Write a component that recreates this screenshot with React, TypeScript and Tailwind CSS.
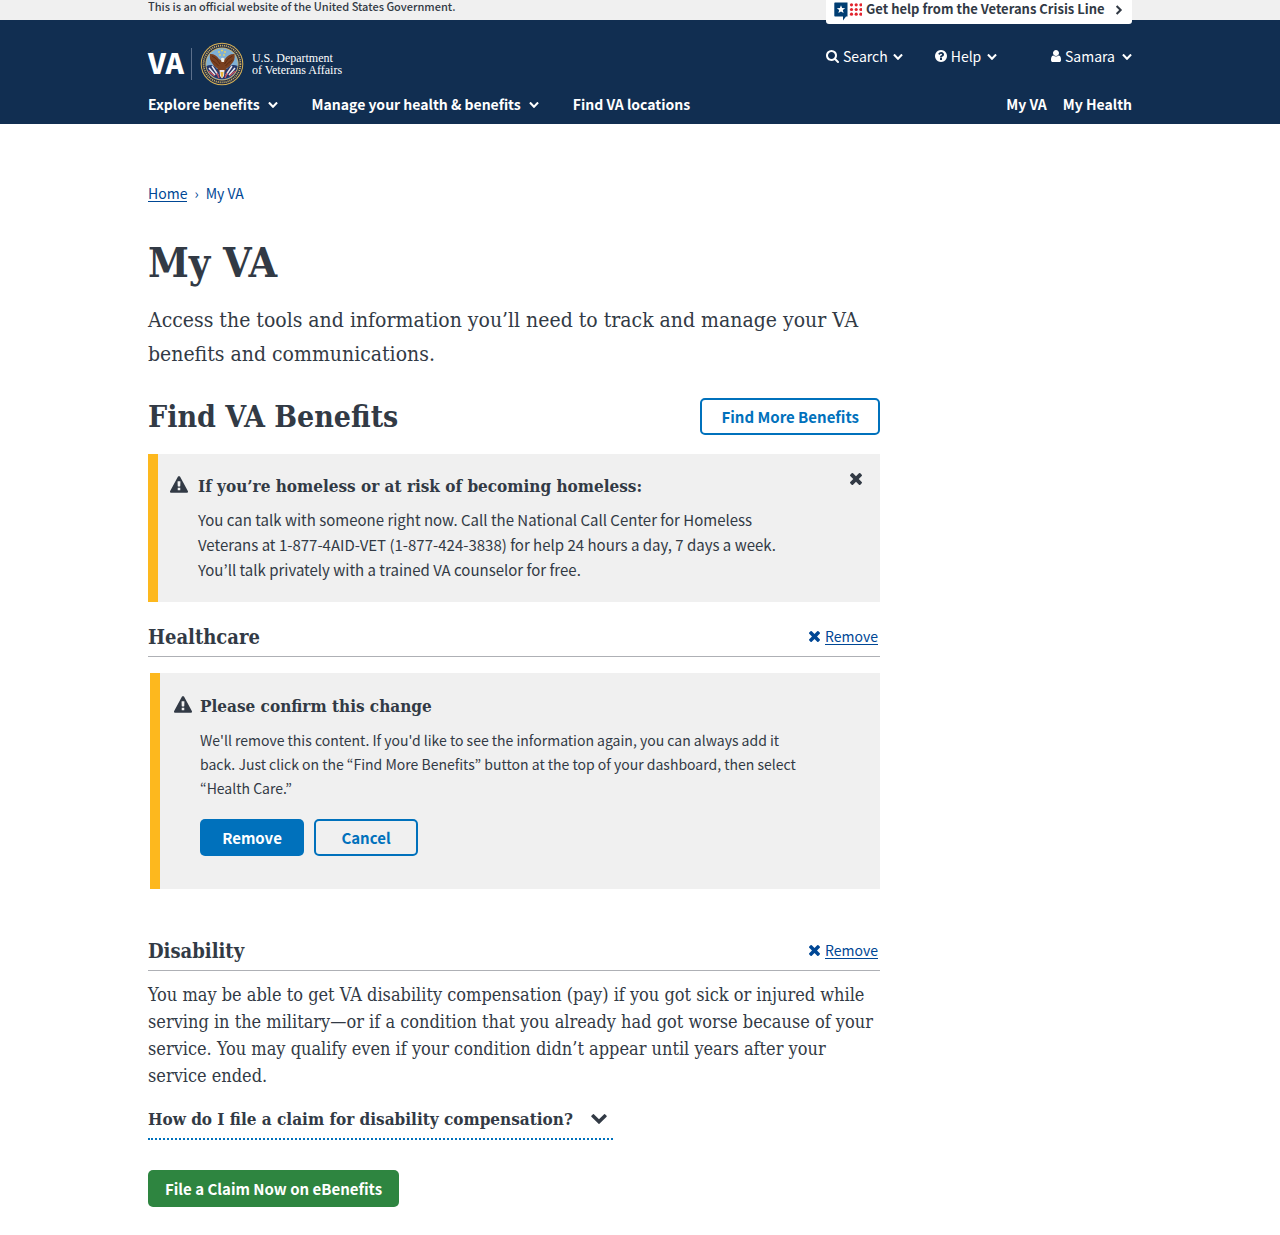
import React, { useState } from "react";

const sans = "font-['Noto_Sans_CJK_JP','Open_Sans',sans-serif]";
const serif = "font-['DejaVu_Serif_Condensed','DejaVu_Serif',serif]";

const shapes = {
  times: {
    box: "302 366 1188 1188",
    d: "M1490 1322q0 40-28 68l-136 136q-28 28-68 28t-68-28l-294-294-294 294q-28 28-68 28t-68-28l-136-136q-28-28-28-68t28-68l294-294-294-294q-28-28-28-68t28-68l136-136q28-28 68-28t68 28l294 294 294-294q28-28 68-28t68 28l136 136q28 28 28 68t-28 68l-294 294 294 294q28 28 28 68z",
  },
  chevron: {
    box: "90 533 1612 1035",
    d: "M1683 808l-742 741q-19 19-45 19t-45-19l-742-741q-19-19-19-45.5t19-45.5l166-165q19-19 45-19t45 19l531 531 531-531q19-19 45-19t45 19l166 165q19 19 19 45.5t-19 45.5z",
  },
  warning: {
    box: "0 0 1792 1664",
    d: "M1024 1375v-190q0-14-9.5-23.5t-22.5-9.5h-192q-13 0-22.5 9.5t-9.5 23.5v190q0 14 9.5 23.5t22.5 9.5h192q13 0 22.5-9.5t9.5-23.5zm-2-374l18-459q0-12-10-19-13-11-24-11h-220q-11 0-24 11-10 7-10 21l17 457q0 10 10 16.5t24 6.5h185q14 0 23.5-6.5t10.5-16.5zm-14-934l768 1408q35 63-2 126-17 29-46.5 46t-63.5 17h-1536q-34 0-63.5-17t-46.5-46q-37-63-2-126l768-1408q17-31 47-49t65-18 65 18 47 49z",
  },
  search: {
    box: "64 128 1664 1664",
    d: "M1216 832q0-185-131.5-316.5t-316.5-131.5-316.5 131.5-131.5 316.5 131.5 316.5 316.5 131.5 316.5-131.5 131.5-316.5zm512 832q0 52-38 90t-90 38q-54 0-90-38l-343-342q-179 124-399 124-143 0-273.5-55.5t-225-150-150-225-55.5-273.5 55.5-273.5 150-225 225-150 273.5-55.5 273.5 55.5 225 150 150 225 55.5 273.5q0 220-124 399l343 343q37 37 37 90z",
  },
  help: {
    box: "128 128 1536 1536",
    d: "M1024 1376v-192q0-14-9-23t-23-9h-192q-14 0-23 9t-9 23v192q0 14 9 23t23 9h192q14 0 23-9t9-23zm256-672q0-88-55.5-163t-138.5-116-170-41q-243 0-371 213-15 24 8 42l132 100q7 6 19 6 16 0 25-12 53-68 86-92 34-24 86-24 48 0 85.5 26t37.5 59q0 38-20 61t-68 45q-63 28-115.5 86.5t-52.5 125.5v36q0 14 9 23t23 9h192q14 0 23-9t9-23q0-19 21.5-49.5t54.5-49.5q32-18 49-28.5t46-35 44.5-48 28-60.5 12.5-81zm384 192q0 209-103 385.5t-279.5 279.5-385.5 103-385.5-103-279.5-279.5-103-385.5 103-385.5 279.5-279.5 385.5-103 385.5 103 279.5 279.5 103 385.5z",
  },
  user: {
    box: "256 128 1280 1536",
    d: "M1536 1399q0 109-62.5 187t-150.5 78h-854q-88 0-150.5-78t-62.5-187q0-85 8.5-160.5t31.5-152 58.5-131 94-89 134.5-34.5q131 128 313 128t313-128q76 0 134.5 34.5t94 89 58.5 131 31.5 152 8.5 160.5zm-256-887q0 159-112.5 271.5t-271.5 112.5-271.5-112.5-112.5-271.5 112.5-271.5 271.5-112.5 271.5 112.5 112.5 271.5z",
  },
};

function Icon({ name, className }: { name: keyof typeof shapes; className: string }) {
  return (
    <svg viewBox={shapes[name].box} className={`shrink-0 ${className}`} fill="currentColor" aria-hidden="true">
      <path d={shapes[name].d} />
    </svg>
  );
}

function Seal() {
  return (
    <svg viewBox="0 0 44 44" className="size-11 shrink-0" aria-label="Seal of the Department of Veterans Affairs" role="img">
      <circle cx="22" cy="22" r="21.3" fill="#d9b356" />
      <circle cx="22" cy="22" r="20.3" fill="#1c2a4a" />
      <circle cx="22" cy="22" r="18.4" fill="none" stroke="#c9ad62" strokeWidth="1.8" strokeDasharray="1.1 0.9" />
      <circle cx="22" cy="22" r="16.6" fill="#d9b356" />
      <circle cx="22" cy="22" r="15.8" fill="#7fb0d6" />
      <path d="M6.4 24 Q13 21 17 27 L27 27 Q31 21 37.6 24 A15.8 15.8 0 0 1 6.4 24Z" fill="#26376b" />
      <path d="M9 26l6 7M12 24l6 9M35 26l-6 7M32 24l-6 9" stroke="#e9e4ea" strokeWidth="1.5" />
      <path d="M8.500 29l6 5M35.500 29l-6 5M17 31l2 5M27 31l-2 5" stroke="#c8505a" strokeWidth="1.4" />
      <g fill="#ecd35d">
        <circle cx="22" cy="8.5" r="1" />
        <circle cx="19" cy="10" r="0.9" />
        <circle cx="25" cy="10" r="0.9" />
        <circle cx="20" cy="13" r="0.9" />
        <circle cx="24" cy="13" r="0.9" />
      </g>
      <path d="M10 12 Q15 11.500 19 17 L22 19 L25 17 Q29 11.500 34.500 12 Q35.500 18 31.500 22 Q29.500 25 26.500 26.500 L25 30 L19 30 L17.500 26.500 Q14 25 12 21 Q9 17 10 12Z" fill="#7a4020" />
      <path d="M12 14q5 2 8 8M11.500 18q4 2 7 6M32.500 14q-5 2-8 8M32.500 18q-4 2-7 6" stroke="#54260f" strokeWidth="0.8" fill="none" />
      <path d="M21 16.500q2-1.500 3.500.5l-.5 3h-2.500z" fill="#f3eee4" />
      <path d="M19.500 28h5l-.5 6-2 2.500-2-2.500z" fill="#e8e5ea" />
      <path d="M20.500 30h3l-.5 4-1 2-1-2z" fill="#e8b63a" />
    </svg>
  );
}

function CrisisIcon() {
  const steps = [0, 1, 2];
  return (
    <svg viewBox="0 0 28 19" className="h-[19px] w-7 shrink-0" aria-hidden="true">
      <path d="M1 0.500h12.500v14h-1.500l-3 4v-4H1q-.7 0-.7-.7V1.200q0-.7.7-.7z" fill="#003e73" />
      <path d="M7 3.200l1.100 2.900 3.100.1-2.400 1.900.8 3L7 9.400l-2.600 1.700.8-3-2.400-1.900 3.100-.1z" fill="#fff" />
      {steps.map((r) =>
        steps.map((c) => <circle key={`${r}${c}`} cx={17.5 + c * 4.7} cy={2.8 + r * 4.7} r="1.6" fill="#e2232e" />),
      )}
    </svg>
  );
}

function RemoveLink() {
  return (
    <a href="#remove" className="flex items-center gap-[5px] pr-0.5 text-[14px] leading-5 text-[#004795]">
      <Icon name="times" className="size-[11px]" />
      <span className="border-b border-[#004795] leading-4">Remove</span>
    </a>
  );
}

function SectionHeader({ title }: { title: string }) {
  return (
    <div className="flex h-10 items-center justify-between border-b border-[#aeb0b5]">
      <h3 className={`${serif} text-[20px] leading-6 font-bold`}>{title}</h3>
      <RemoveLink />
    </div>
  );
}

export default function App() {
  const [open, setOpen] = useState(false);
  return (
    <div className={`${sans} min-h-screen bg-white pb-7 text-[#323a45]`}>
      <div className="h-5 bg-[#f0f0f0]">
        <div className="mx-auto flex max-w-[984px] items-start justify-between">
          <p className="text-[11px] leading-3 font-medium">This is an official website of the United States Government.</p>
          <a
            href="#crisis"
            className="relative z-10 flex h-6 w-[306px] items-start gap-1 rounded-b-[3px] bg-white px-2 pt-0.5 text-[13px] leading-[14px] font-bold"
          >
            <CrisisIcon />
            <span>Get help from the Veterans Crisis Line</span>
            <Icon name="chevron" className="mt-[5px] ml-auto h-1.5 w-2.5 -rotate-90" />
          </a>
        </div>
      </div>

      <header className="bg-[#112e51] text-white">
        <div className="mx-auto flex h-[104px] max-w-[984px] flex-col justify-between pb-2.5">
          <div className="flex items-start justify-between">
            <a href="#home" className="mt-[22px] flex items-center">
              <span className="pb-1 text-[28px] leading-10 font-black">VA</span>
              <span className="ml-[7px] h-8 w-px bg-[#5b6f8b]" />
              <span className="ml-2">
                <Seal />
              </span>
              <span className="ml-2 font-['Liberation_Serif',serif] text-[12px] leading-3">
                U.S. Department
                <br />
                of Veterans Affairs
              </span>
            </a>
            <div className="flex w-[306px] pt-[26px] text-[14px] leading-5">
              <button className="flex items-center gap-1">
                <Icon name="search" className="size-[13px]" />
                Search
                <Icon name="chevron" className="mt-0.5 ml-px h-1.5 w-2.5" />
              </button>
              <button className="ml-8 flex items-center gap-1">
                <Icon name="help" className="size-3" />
                Help
                <Icon name="chevron" className="mt-0.5 ml-0.5 h-1.5 w-2.5" />
              </button>
              <button className="ml-auto flex items-center gap-1">
                <Icon name="user" className="h-3 w-2.5" />
                Samara
                <Icon name="chevron" className="mt-0.5 ml-[3px] h-1.5 w-2.5" />
              </button>
            </div>
          </div>
          <nav className="flex items-center justify-between text-[14px] leading-5 font-bold">
            <div className="flex gap-[34px]">
              <button className="flex items-center gap-2">
                Explore benefits
                <Icon name="chevron" className="mt-0.5 h-1.5 w-2.5" />
              </button>
              <button className="flex items-center gap-2">
                Manage your health &amp; benefits
                <Icon name="chevron" className="mt-0.5 h-1.5 w-2.5" />
              </button>
              <a href="#locations">Find VA locations</a>
            </div>
            <div className="flex gap-4">
              <a href="#my-va">My VA</a>
              <a href="#my-health">My Health</a>
            </div>
          </nav>
        </div>
      </header>

      <div className="mx-auto max-w-[984px] pt-[59px]">
        <main className="max-w-[732px]">
          <nav aria-label="Breadcrumb" className="flex items-center gap-[7px] text-[14px] leading-5 text-[#004795]">
            <a href="#home" className="border-b border-[#004795] leading-4">
              Home
            </a>
            <span>›</span>
            <span>My VA</span>
          </nav>

          <h1 className={`${serif} mt-8 text-[41px] leading-[56px] font-bold`}>My VA</h1>
          <p className={`${serif} mt-3 text-[21px] leading-[34px]`}>
            Access the tools and information you’ll need to track and manage your VA benefits and communications.
          </p>

          <div className="mt-[27px] flex items-center justify-between">
            <h2 className={`${serif} text-[30px] leading-9 font-bold`}>Find VA Benefits</h2>
            <button className="h-[37px] rounded-[5px] border-2 border-[#0071bc] px-[19px] text-[15px] leading-5 font-bold text-[#0071bc]">
              Find More Benefits
            </button>
          </div>

          <section className="mt-[19px] flex items-start border-l-10 border-[#fdb81e] bg-[#f0f0f0] pt-5 pr-[18px] pb-5 pl-3">
            <Icon name="warning" className="mt-0.5 h-[17px] w-[18px]" />
            <div className="mr-auto ml-2.5 max-w-[610px]">
              <h3 className={`${serif} text-[17px] leading-6 font-bold`}>If you’re homeless or at risk of becoming homeless:</h3>
              <p className="mt-[9px] text-[15px] leading-[25px]">
                You can talk with someone right now. Call the National Call Center for Homeless Veterans at 1-877-4AID-VET
                (1-877-424-3838) for help 24 hours a day, 7 days a week. You’ll talk privately with a trained VA counselor for free.
              </p>
            </div>
            <button aria-label="Dismiss" className="-mt-px">
              <Icon name="times" className="size-3" />
            </button>
          </section>

          <section className="mt-[15px]">
            <SectionHeader title="Healthcare" />
            <div className="mt-4 ml-0.5 flex items-start border-l-10 border-[#fdb81e] bg-[#f0f0f0] pt-[21px] pr-[60px] pb-[33px] pl-3.5">
              <Icon name="warning" className="mt-0.5 h-[17px] w-[18px]" />
              <div className="ml-2 max-w-[612px]">
                <h4 className={`${serif} text-[17px] leading-6 font-bold`}>Please confirm this change</h4>
                <p className="mt-2.5 text-[14px] leading-6">
                  We'll remove this content. If you'd like to see the information again, you can always add it back. Just click on the
                  “Find More Benefits” button at the top of your dashboard, then select “Health Care.”
                </p>
                <div className="mt-[19px] flex gap-2.5 text-[15px] leading-5 font-bold">
                  <button className="h-[37px] w-[104px] rounded-[5px] bg-[#0071bc] text-white">Remove</button>
                  <button className="h-[37px] w-[104px] rounded-[5px] border-2 border-[#0071bc] text-[#0071bc]">Cancel</button>
                </div>
              </div>
            </div>
          </section>

          <section className="mt-[42px]">
            <SectionHeader title="Disability" />
            <p className={`${serif} mt-2.5 max-w-[728px] text-[18px] leading-[27px]`}>
              You may be able to get VA disability compensation (pay) if you got sick or injured while serving in the military—or
              if a condition that you already had got worse because of your service. You may qualify even if your condition didn’t
              appear until years after your service ended.
            </p>
            <button
              onClick={() => setOpen(!open)}
              aria-expanded={open}
              className={`${serif} mt-4 flex w-[465px] max-w-full items-center justify-between border-b-2 border-dotted border-[#0071bc] pr-1.5 pb-[5px] text-left text-[17px] leading-7 font-bold`}
            >
              How do I file a claim for disability compensation?
              <Icon name="chevron" className="h-2.5 w-4" />
            </button>
            <a
              href="#claim"
              className="mt-[30px] inline-flex h-[37px] items-center rounded-[5px] bg-[#2e8540] px-[17px] text-[15px] leading-5 font-bold text-white"
            >
              File a Claim Now on eBenefits
            </a>
          </section>
        </main>
      </div>
    </div>
  );
}
